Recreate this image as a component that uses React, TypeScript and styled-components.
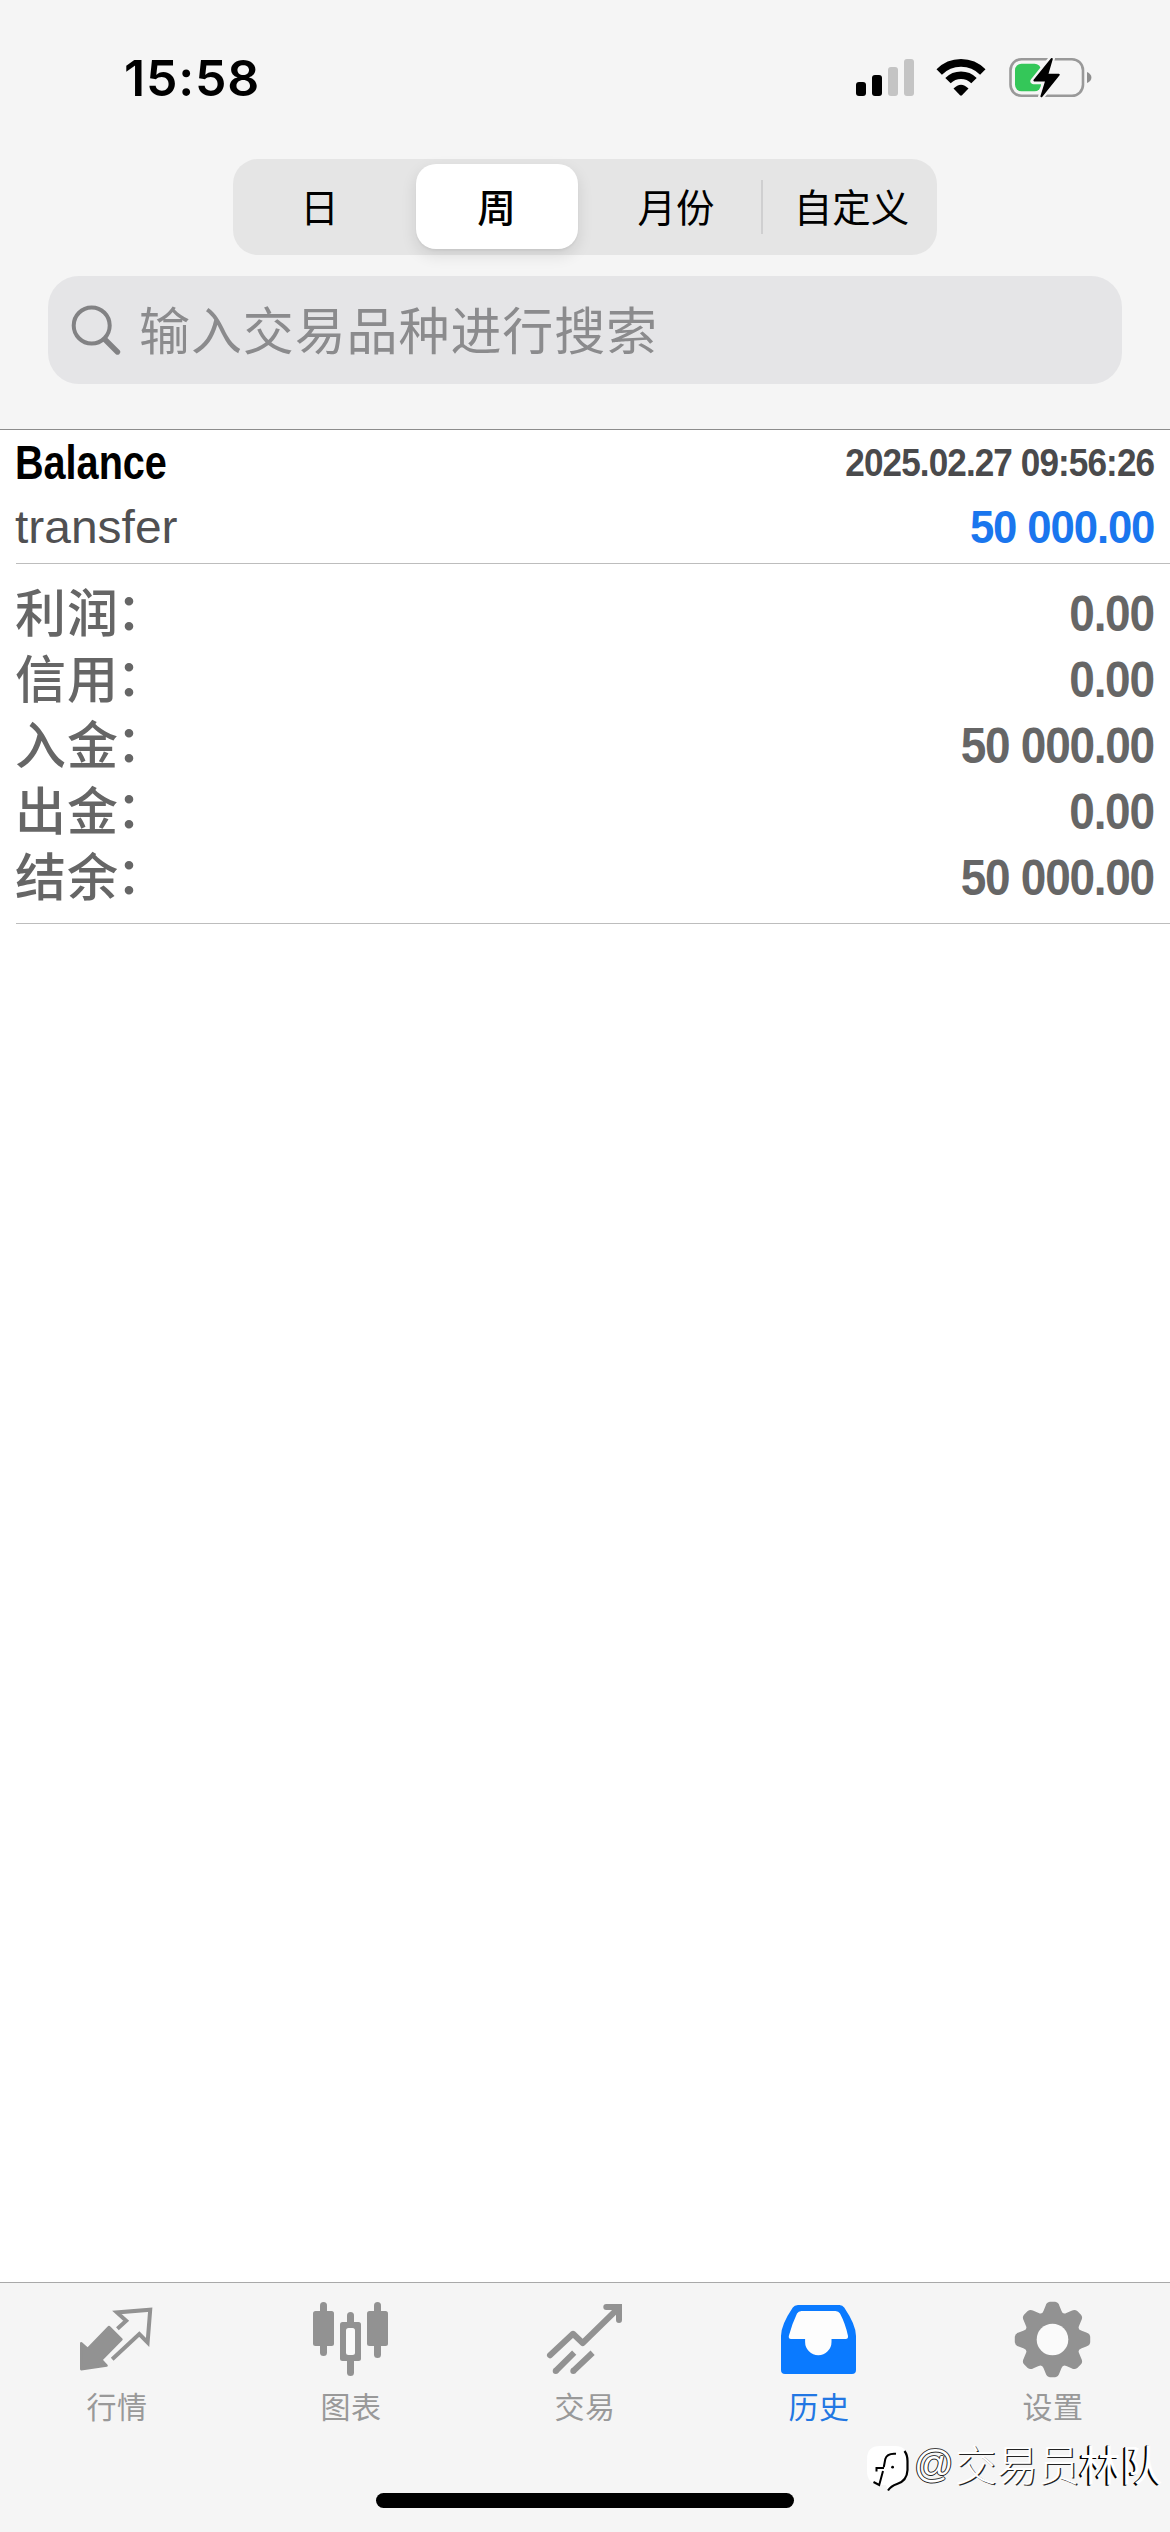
import React from 'react';
import styled, { createGlobalStyle } from 'styled-components';

const CJK = '"Noto Sans CJK SC", sans-serif';
const GRAY = '#929292';
const BLUE = '#0a7aff';
const BAR = '#f5f5f5';

const GlobalStyle = createGlobalStyle`
  body { margin: 0; background: #fff; }
  * { box-sizing: border-box; }
`;

const Screen = styled.div`
  position: relative;
  width: 1170px;
  height: 2532px;
  display: flex;
  flex-direction: column;
  overflow: hidden;
  background: #fff;
  font-family: ${CJK};
`;

const Header = styled.header`
  height: 430px;
  background: ${BAR};
  border-bottom: 1px solid #8c8c8c;
  display: flex;
  flex-direction: column;
  align-items: center;
`;

const StatusBar = styled.div`
  width: 100%;
  height: 159px;
  padding: 56px 78px 0 124px;
  display: flex;
  justify-content: space-between;
  align-items: flex-start;
`;

const Clock = styled.div`
  font: 600 50px/44px Inter, sans-serif;
  color: #000;
  letter-spacing: 0.8px;
`;

const StatusIcons = styled.div`
  display: flex;
  align-items: flex-start;
  gap: 22px;
`;

const Segments = styled.div`
  width: 704px;
  height: 96px;
  padding: 5px 0 6px;
  border-radius: 25px;
  background: #e5e5e5;
  display: grid;
  grid-template-columns: repeat(4, 177px);
  justify-content: center;
`;

const Segment = styled.button<{ $active?: boolean; $divider?: boolean; $shift?: number }>`
  margin: 0 7.5px;
  padding: 0 0 3px ${p => p.$shift ?? 0}px;
  border: 0;
  border-radius: 20px;
  font: ${p => (p.$active ? 500 : 400)} 38.5px/82px ${CJK};
  white-space: nowrap;
  color: #000;
  background: ${p => (p.$active ? '#fff' : 'transparent')};
  box-shadow: ${p => (p.$active ? '0 6px 16px rgba(0,0,0,0.11), 0 2px 2px rgba(0,0,0,0.04)' : 'none')};
  position: relative;
  ${p => p.$divider && `
    &::before {
      content: '';
      position: absolute;
      left: -9px;
      top: 16px;
      width: 2px;
      height: 54px;
      background: #cfcfd0;
    }
  `}
`;

const SearchField = styled.div`
  width: 1074px;
  height: 108px;
  margin-top: 21px;
  padding: 0 22px;
  border-radius: 31px;
  background: #e5e5e7;
  display: flex;
  align-items: center;
  gap: 17px;
`;

const Placeholder = styled.span`
  padding-bottom: 4px;
  font: 400 51px/74px ${CJK};
  letter-spacing: 0.9px;
  color: #8b8b8d;
`;

const Content = styled.main`
  height: 1852px;
  padding-left: 16px;
`;

const Deal = styled.section`
  height: 134px;
  padding-right: 16px;
  border-bottom: 1px solid #bdbdbd;
`;

const DealRow = styled.div<{ $height: number }>`
  height: ${p => p.$height}px;
  display: flex;
  justify-content: space-between;
  align-items: center;
`;

const Condensed = styled.span<{
  $size: number;
  $scale: number;
  $color: string;
  $right?: boolean;
  $weight?: number;
  $tracking?: number;
}>`
  display: inline-block;
  margin-left: ${p => (p.$right ? 0 : -1.5)}px;
  font-family: "Liberation Sans", Arial, sans-serif;
  font-weight: ${p => p.$weight ?? 700};
  font-size: ${p => p.$size}px;
  line-height: 60px;
  letter-spacing: ${p => p.$tracking ?? 0}px;
  white-space: nowrap;
  color: ${p => p.$color};
  transform: scaleX(${p => p.$scale});
  transform-origin: ${p => (p.$right ? 'right' : 'left')} center;
`;

const Summary = styled.section`
  height: 360px;
  padding: 17px 16px 0 0;
  border-bottom: 1px solid #bdbdbd;
`;

const SummaryRow = styled.div`
  height: 66px;
  display: flex;
  justify-content: space-between;
  align-items: center;
`;

const Label = styled.span`
  display: flex;
  margin-left: -1px;
  padding-bottom: 7px;
  font: 500 51px/59px ${CJK};
  letter-spacing: 0.9px;
  color: #666;
`;

const Colon = styled.span`
  transform: translate(-2.5px, -2.5px);
`;

const TabBar = styled.nav`
  height: 250px;
  border-top: 1px solid #a9a9a9;
  background: ${BAR};
  display: flex;
  flex-direction: column;
  align-items: center;
`;

const Tabs = styled.div`
  width: 100%;
  height: 210px;
  padding-top: 17px;
  display: grid;
  grid-template-columns: repeat(5, 1fr);
`;

const Tab = styled.div<{ $active?: boolean }>`
  display: flex;
  flex-direction: column;
  align-items: center;
  gap: 5px;
  font: 400 30px/44px ${CJK};
  letter-spacing: 0.6px;
  color: ${p => (p.$active ? '#2277e3' : '#999')};
`;

const HomeIndicator = styled.div`
  width: 418px;
  height: 15px;
  border-radius: 8px;
  background: #000;
`;

const Watermark = styled.div`
  position: absolute;
  left: 866px;
  top: 2439px;
  display: flex;
  align-items: flex-start;
  white-space: nowrap;
  font: 300 41.5px/48px ${CJK};
  color: #fff;
`;

const WatermarkAt = styled.span`
  width: 41px;
  margin-left: 4px;
  font: 400 39px/50px "Liberation Sans", sans-serif;
  text-shadow: -1px 0 0 #222, 1px 0 0 #222, 0 1.4px 0 #222, 0 -0.6px 0 #444;
`;

const WatermarkText = styled.span<{ $strong?: boolean }>`
  font-weight: ${p => (p.$strong ? 400 : 300)};
  text-shadow: ${p => (p.$strong ? '-2px 1px 0 #000, -1px 0 0 #000' : '1.3px 1.3px 0 #222')};
`;

const Signal = () => (
  <svg width="58" height="43" viewBox="0 0 58 43">
    <rect x="0" y="26" width="10" height="14" rx="3" />
    <rect x="16" y="19" width="10" height="21" rx="3" />
    <rect x="32" y="11" width="10" height="29" rx="3" fill="#c4c4c4" />
    <rect x="48" y="3" width="10" height="37" rx="3" fill="#c4c4c4" />
  </svg>
);

const Wifi = () => (
  <svg width="50" height="43" viewBox="0 -3 50 43" fill="none" stroke="#000" strokeWidth="7.6">
    <path d="M3.2 13 A30.6 30.6 0 0 1 46.8 13" />
    <path d="M12 21.6 A18.4 18.4 0 0 1 38 21.6" />
    <path d="M17.5 29.6 Q25 22 32.5 29.6 L26 36.3 Q25 37.2 24 36.3Z" fill="#000" stroke="none" />
  </svg>
);

const Battery = () => (
  <svg width="84" height="43" viewBox="0 0 84 43">
    <rect x="2.5" y="3.2" width="72.5" height="36.6" rx="11" fill="none" stroke="#999" strokeWidth="2.6" />
    <path d="M79 16 Q83.4 18 83.4 21.5 Q83.4 25 79 27Z" fill="#8e8e8e" />
    <rect x="7" y="7.7" width="26" height="27.6" rx="6.5" fill="#34c759" />
    <path
      d="M44 2 L25.4 25.2 H37.5 L33 41 L51.6 18 H40Z"
      stroke={BAR} strokeWidth="6" strokeLinejoin="round" fill={BAR}
    />
    <path
      d="M43.8 3 L26.4 24.5 H38.3 L33.4 40.3 L50.8 18.7 H39.2Z"
      fill="#000" stroke="#000" strokeWidth="2" strokeLinejoin="round"
    />
  </svg>
);

const SearchIcon = () => (
  <svg width="52" height="52" viewBox="0 0 52 52" fill="none" stroke="#828284" strokeLinecap="round">
    <circle cx="21.7" cy="21.5" r="18" strokeWidth="4" />
    <path d="M35 35.5 L47.5 48" strokeWidth="5.4" />
  </svg>
);

const QuotesIcon = () => (
  <svg width="78" height="78" viewBox="0 0 78 78">
    <path
      d="M31 26.9 L43.5 39.3 L23.3 59.8 L28.6 65.6 L3.2 69.2 L3.2 43.2 L9.7 48.8Z"
      fill={GRAY} stroke={GRAY} strokeWidth="2.4" strokeLinejoin="round"
    />
    <path
      d="M39.4 28.8 L48.2 20.8 L38.9 12.4 L72.2 9.8 L69.6 42.4 L61.3 34 L34.2 59.2"
      fill="none" stroke={GRAY} strokeWidth="4"
    />
  </svg>
);

const ChartIcon = () => (
  <svg width="78" height="78" viewBox="0 0 78 78" fill={GRAY}>
    <rect x="8" y="2" width="7" height="54" rx="3.5" />
    <rect x="1" y="11" width="21" height="35" rx="2.5" />
    <rect x="62" y="2" width="7" height="56" rx="3.5" />
    <rect x="55" y="11" width="21" height="35" rx="2.5" />
    <rect x="35" y="12" width="7" height="64" rx="3.5" />
    <rect x="28" y="22" width="21" height="39" rx="2.5" />
    <rect x="34" y="28" width="9" height="27" rx="2.5" fill="#fafafa" />
  </svg>
);

const TradeIcon = () => (
  <svg width="78" height="78" viewBox="0 0 78 78" fill="none" stroke={GRAY} strokeWidth="6">
    <path d="M4 55.2 L27 33.8 L36.7 43 L72 8.5" strokeLinecap="round" strokeLinejoin="round" />
    <path d="M60.3 7 H73 V20" strokeLinecap="round" />
    <path d="M71 4 H76 V10 H71Z" fill={GRAY} stroke="none" />
    <path d="M9.7 71 L28.2 52.6 M27.3 71 L46.6 52.8" />
    <path d="M9.7 71 h.01 M27.3 71 h.01" strokeLinecap="round" />
  </svg>
);

const HistoryIcon = () => (
  <svg width="78" height="78" viewBox="0 0 78 78">
    <path
      d="M18 5 H59.5 Q62.6 5 64.2 7.6 Q76 25 76 36 V70 Q76 74 72 74 H5 Q1 74 1 70 V36 Q1 25 12.8 7.6 Q14.4 5 18 5Z"
      fill={BLUE}
    />
    <path
      d="M21.5 11 H55.5 Q58.6 11 60 13.6 Q65.5 24 68 36 Q68.3 39 65.8 39 H51.5 V42 A13.2 13.2 0 0 1 25.1 42 V39 H11 Q8.4 39 8.8 36 Q12 24 17 13.6 Q18.4 11 21.5 11Z"
      fill="#fdfdfd"
    />
  </svg>
);

const gearPath = Array.from({ length: 8 }, (_, i) => {
  const at = (deg: number, r: number) => {
    const a = ((i * 45 + deg - 90) * Math.PI) / 180;
    return `${(38.5 + r * Math.cos(a)).toFixed(2)} ${(39.5 + r * Math.sin(a)).toFixed(2)}`;
  };
  return `${i ? 'L' : 'M'}${at(-17.5, 30)} L${at(-11.5, 34.5)} Q${at(-9, 37.8)} ${at(-4, 37.8)} L${at(4, 37.8)} Q${at(9, 37.8)} ${at(11.5, 34.5)} L${at(17.5, 30)} Q${at(22.5, 27)} ${at(27.5, 30)}`;
}).join(' ') + 'Z';

const SettingsIcon = () => (
  <svg width="78" height="78" viewBox="0 0 78 78">
    <path d={gearPath} fill={GRAY} />
    <circle cx="38.5" cy="39.5" r="15.8" fill="#fafafa" />
  </svg>
);

const WatermarkLogo = () => (
  <svg width="44" height="56" viewBox="0 0 44 56">
    <path d="M14 7 H29 Q41.5 7 41.5 20 V32 Q41 43 31 45 Q26 47 22 52 L20 46 H14 Q1 45 1 32 V20 Q1 7 14 7Z" fill="#fff" />
    <path
      d="M38.5 12 Q41.5 16 41.5 22 V31 Q41 42 31 45 Q25 47 22 51.5"
      fill="none" stroke="#000" strokeWidth="2.2"
    />
    <path d="M30 14.8 Q21 14 19.3 20 L17.8 28 M10.5 32.5 V29 H18 M17 32 L13.2 46 L7.5 43" fill="none" stroke="#000" strokeWidth="2" />
    <circle cx="26.6" cy="28.2" r="1.4" />
  </svg>
);

const summary = [
  ['利润', '0.00'],
  ['信用', '0.00'],
  ['入金', '50 000.00'],
  ['出金', '0.00'],
  ['结余', '50 000.00'],
];

const tabs = [
  { label: '行情', Icon: QuotesIcon },
  { label: '图表', Icon: ChartIcon },
  { label: '交易', Icon: TradeIcon },
  { label: '历史', Icon: HistoryIcon, active: true },
  { label: '设置', Icon: SettingsIcon },
];

export default function App() {
  return (
    <Screen lang="zh-CN">
      <GlobalStyle />
      <Header>
        <StatusBar>
          <Clock>15:58</Clock>
          <StatusIcons>
            <Signal />
            <Wifi />
            <Battery />
          </StatusIcons>
        </StatusBar>
        <Segments>
          <Segment>日</Segment>
          <Segment $active>周</Segment>
          <Segment $shift={5}>月份</Segment>
          <Segment $divider $shift={2}>自定义</Segment>
        </Segments>
        <SearchField>
          <SearchIcon />
          <Placeholder>输入交易品种进行搜索</Placeholder>
        </SearchField>
      </Header>
      <Content>
        <Deal>
          <DealRow $height={66}>
            <Condensed $size={48} $scale={0.825} $color="#000">Balance</Condensed>
            <Condensed $size={39} $scale={0.9} $tracking={-1} $color="#4a4a4c" $right>2025.02.27 09:56:26</Condensed>
          </DealRow>
          <DealRow $height={62}>
            <Condensed $size={47} $scale={1.02} $weight={400} $color="#505052">transfer</Condensed>
            <Condensed $size={47} $scale={0.93} $tracking={-1.2} $color="#1a76ee" $right>50 000.00</Condensed>
          </DealRow>
        </Deal>
        <Summary>
          {summary.map(([label, value]) => (
            <SummaryRow key={label}>
              <Label>{label}<Colon>：</Colon></Label>
              <Condensed $size={50} $scale={0.92} $tracking={-1.4} $color="#666" $right>{value}</Condensed>
            </SummaryRow>
          ))}
        </Summary>
      </Content>
      <TabBar>
        <Tabs>
          {tabs.map(({ label, Icon, active }) => (
            <Tab key={label} $active={active}>
              <Icon />
              {label}
            </Tab>
          ))}
        </Tabs>
        <HomeIndicator />
      </TabBar>
      <Watermark>
        <WatermarkLogo />
        <WatermarkAt>@</WatermarkAt>
        <WatermarkText>交易员</WatermarkText>
        <WatermarkText $strong>林队</WatermarkText>
      </Watermark>
    </Screen>
  );
}
